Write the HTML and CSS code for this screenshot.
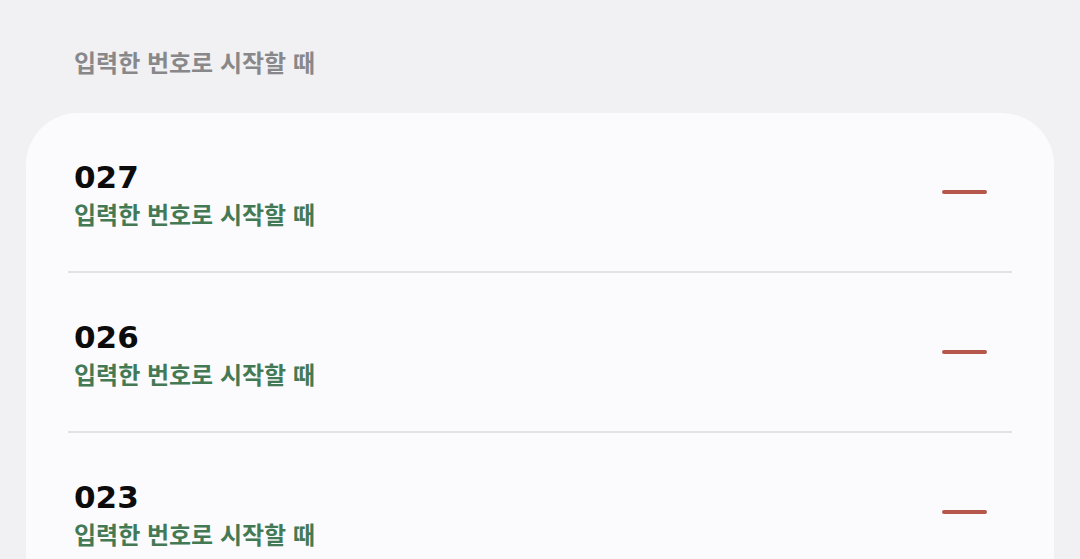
FILE: index.html
```html
<!DOCTYPE html>
<html lang="ko">
<head>
<meta charset="utf-8">
<link rel="stylesheet" href="styles.css">
</head>
<body>
<div class="page">
  <h2 class="section-title">입력한 번호로 시작할 때</h2>
  <div class="card">
    <div class="row">
      <div class="text">
        <div class="num">027</div>
        <div class="sub">입력한 번호로 시작할 때</div>
      </div>
      <button class="remove" aria-label="삭제"><span class="bar"></span></button>
    </div>
    <div class="divider"></div>
    <div class="row">
      <div class="text">
        <div class="num">026</div>
        <div class="sub">입력한 번호로 시작할 때</div>
      </div>
      <button class="remove" aria-label="삭제"><span class="bar"></span></button>
    </div>
    <div class="divider"></div>
    <div class="row">
      <div class="text">
        <div class="num">023</div>
        <div class="sub">입력한 번호로 시작할 때</div>
      </div>
      <button class="remove" aria-label="삭제"><span class="bar"></span></button>
    </div>
  </div>
</div>
</body>
</html>
```

FILE: styles.css
```css
html, body {
  margin: 0;
  padding: 0;
  background: #f1f1f3;
}
body {
  font-family: "Noto Sans CJK KR", "Noto Sans", sans-serif;
}
.page {
  display: flex;
  flex-direction: column;
  height: 100vh;
  overflow: hidden;
}
.section-title {
  margin: 0;
  height: 113px;
  flex-shrink: 0;
  box-sizing: border-box;
  padding: 45px 0 0 74px;
  font-size: 24px;
  font-weight: 700;
  line-height: 34px;
  color: #88888b;
}
.card {
  margin: 0 26px;
  background: #fbfbfd;
  border-radius: 52px 52px 0 0;
  padding: 0 42px;
  flex: 1 0 auto;
}
.row {
  height: 158px;
  display: flex;
  align-items: center;
  justify-content: space-between;
  padding: 0 25px 0 6px;
  box-sizing: border-box;
}
.text {
  display: flex;
  flex-direction: column;
  padding-top: 8px;
}
.num {
  font-family: "DejaVu Sans", sans-serif;
  font-size: 31px;
  font-weight: 700;
  line-height: 30px;
  margin-bottom: 6px;
  color: #0c0c0c;
}
.sub {
  font-size: 24px;
  font-weight: 700;
  line-height: 32px;
  color: #437a55;
}
.remove {
  border: 0;
  background: none;
  padding: 0;
  width: 45px;
  height: 20px;
  display: flex;
  align-items: center;
}
.bar {
  display: block;
  width: 45px;
  height: 3.5px;
  border-radius: 2px;
  background: #b5574a;
}
.divider {
  height: 2px;
  background: #e3e3e5;
}
```
